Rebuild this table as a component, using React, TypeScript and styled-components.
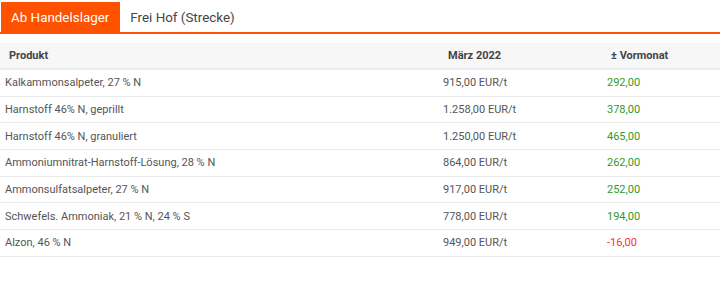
import React from "react";
import styled, { createGlobalStyle } from "styled-components";

const Global = createGlobalStyle`
  html, body { margin: 0; padding: 0; background: #fff; }
  body { font-family: Roboto, "Liberation Sans", Arial, sans-serif; }
`;

const Page = styled.div`
  width: 720px;
  padding-top: 2px;
`;

const TabBar = styled.div`
  display: flex;
  border-bottom: 2px solid #ff5200;
  padding-left: 1px;
  height: 30px;
`;

const Tab = styled.div<{ $active?: boolean }>`
  display: flex;
  align-items: center;
  padding: 0 11px 0 10px;
  font-size: 13.4px;
  color: ${(p) => (p.$active ? "#fff" : "#444")};
  background: ${(p) => (p.$active ? "#ff5200" : "transparent")};
`;

const Table = styled.div`
  margin-top: 9px;
  display: grid;
  grid-template-columns: 438px 164px 1fr;
  font-size: 11px;
`;

const HeadCell = styled.div<{ $pad?: number }>`
  height: 25px;
  display: flex;
  align-items: center;
  padding-left: ${(p) => p.$pad ?? 10}px;
  background: #f7f7f8;
  border-bottom: 2px solid #e8ebf0;
  font-weight: 700;
  color: #444;
`;

const Cell = styled.div<{ $tone?: "up" | "down" }>`
  height: 25.66px;
  display: flex;
  align-items: center;
  padding-left: 5px;
  border-bottom: 1px solid #e9e9e9;
  color: ${(p) => (p.$tone === "up" ? "#2f9a2f" : p.$tone === "down" ? "#f2323c" : "#555")};
`;

const rows: [string, string, string][] = [
  ["Kalkammonsalpeter, 27 % N", "915,00 EUR/t", "292,00"],
  ["Harnstoff 46% N, geprillt", "1.258,00 EUR/t", "378,00"],
  ["Harnstoff 46% N, granuliert", "1.250,00 EUR/t", "465,00"],
  ["Ammoniumnitrat-Harnstoff-Lösung, 28 % N", "864,00 EUR/t", "262,00"],
  ["Ammonsulfatsalpeter, 27 % N", "917,00 EUR/t", "252,00"],
  ["Schwefels. Ammoniak, 21 % N, 24 % S", "778,00 EUR/t", "194,00"],
  ["Alzon, 46 % N", "949,00 EUR/t", "-16,00"],
];

export default function App() {
  return (
    <Page>
      <Global />
      <TabBar>
        <Tab $active>Ab Handelslager</Tab>
        <Tab>Frei Hof (Strecke)</Tab>
      </TabBar>
      <Table>
        <HeadCell $pad={9}>Produkt</HeadCell>
        <HeadCell $pad={10}>März 2022</HeadCell>
        <HeadCell $pad={9}>± Vormonat</HeadCell>
        {rows.map(([name, price, delta]) => (
          <React.Fragment key={name}>
            <Cell>{name}</Cell>
            <Cell>{price}</Cell>
            <Cell $tone={delta.startsWith("-") ? "down" : "up"}>{delta}</Cell>
          </React.Fragment>
        ))}
      </Table>
    </Page>
  );
}
